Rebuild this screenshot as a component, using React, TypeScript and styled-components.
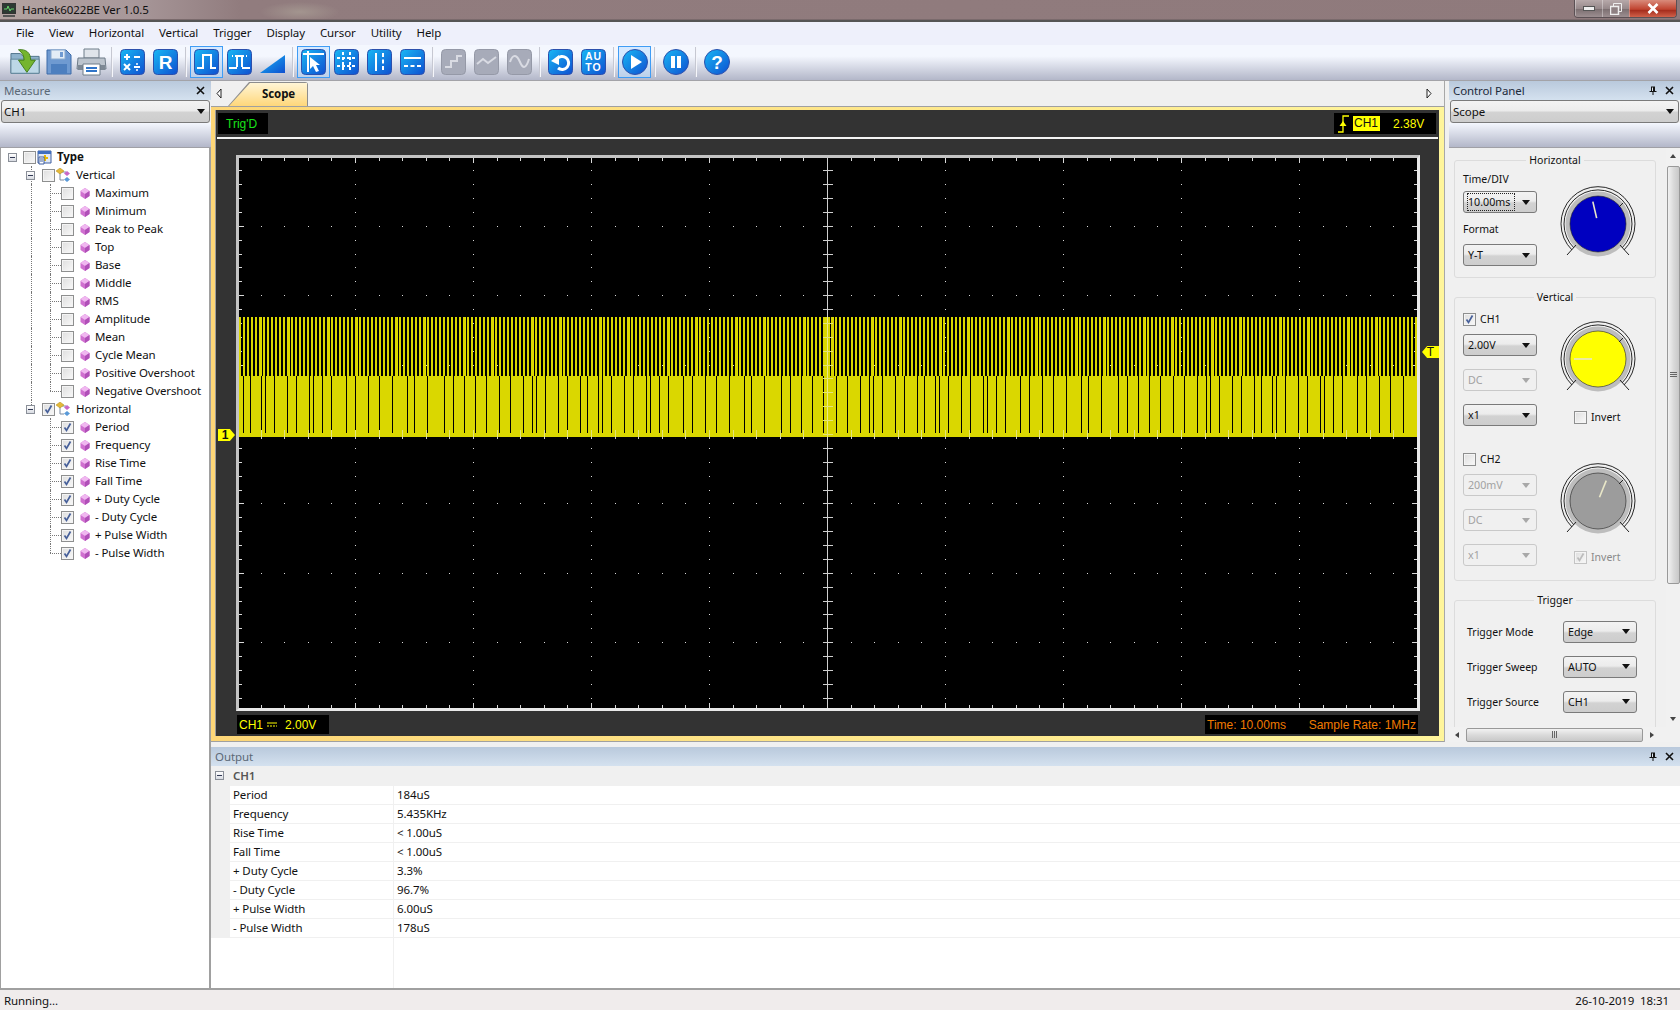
import React from "react"
import styled, { createGlobalStyle } from "styled-components"

const UI = `"Noto Sans", "Liberation Sans", sans-serif`
const ARIAL = `"Liberation Sans", Arial, sans-serif`

const GlobalStyle = createGlobalStyle`
    html, body { margin: 0; padding: 0; background: #f0f0f0; }
    * { box-sizing: border-box; }
`

const Window = styled.div`
    width: 1680px;
    height: 1010px;
    overflow: hidden;
    display: flex;
    flex-direction: column;
    font: 11.5px ${UI};
    letter-spacing: -0.1px;
    color: #111;
    background: #f0f0f0;
`

/* title bar */
const TitleBar = styled.div`
    height: 22px;
    flex: none;
    display: flex;
    align-items: flex-start;
    padding-left: 2px;
    border-bottom: 2px solid #555;
    background:
        radial-gradient(ellipse 40px 10px at 300px 12px, #a3958f 0, transparent 100%),
        linear-gradient(to right, #b3a3a1 0, #a8989a 130px, #917c7e 240px, #8f7a7c 100%);
    box-shadow: inset 0 -1px 0 #7a6a6c;
`
const TitleText = styled.span`
    margin: 1px 0 0 6px;
    line-height: 17px;
    color: #101010;
`
const WindowButtons = styled.div`
    margin-left: auto;
    margin-right: 3px;
    height: 18px;
    display: flex;
    border: 1px solid #5b5054;
    border-top: 0;
    border-radius: 0 0 4px 4px;
    overflow: hidden;
`
const WindowButton = styled.div<{ $close?: boolean }>`
    width: ${({ $close }) => ($close ? "47px" : "27px")};
    display: flex;
    align-items: center;
    justify-content: center;
    border-left: 1px solid rgba(255, 255, 255, 0.35);
    background: ${({ $close }) =>
        $close
            ? "linear-gradient(#d98b7b, #c0432f 55%, #a52c1c 60%, #d0614a)"
            : "linear-gradient(#b7a9aa, #97898b 50%, #7d7072 55%, #9c8e90)"};
`

/* menu and toolbar */
const MenuBar = styled.div`
    height: 23px;
    flex: none;
    display: flex;
    align-items: center;
    gap: 15px;
    padding: 0 0 2px 16px;
    background: #eef0fb;
`
const ToolBar = styled.div`
    height: 36px;
    flex: none;
    display: flex;
    align-items: center;
    padding: 0 0 2px 9px;
    border-bottom: 1px solid #a3a3a8;
    background: linear-gradient(#f4f7fe 0, #f4f7fe 32%, #b3b7c9 100%);
`
const ToolButton = styled.div<{ $active?: boolean }>`
    width: 33px;
    height: 32px;
    display: flex;
    align-items: center;
    justify-content: center;
    border: 1px solid ${({ $active }) => ($active ? "#3f9cf5" : "transparent")};
    background: ${({ $active }) => ($active ? "rgba(190, 222, 255, 0.55)" : "transparent")};
`
const ToolSep = styled.div`
    width: 2px;
    height: 30px;
    margin: 0 3px;
    background: linear-gradient(to right, #c6c8d2 50%, #f5f6fb 50%);
`
const HiddenDefs = styled.svg`
    position: absolute;
    width: 0;
    height: 0;
`

/* main layout */
const Main = styled.div`
    flex: 1;
    min-height: 0;
    display: grid;
    grid-template-columns: 211px 1fr;
`
const SidePanel = styled.div`
    display: flex;
    flex-direction: column;
    min-height: 0;
`
const PanelHeader = styled.div<{ $dim?: boolean }>`
    height: 19px;
    flex: none;
    display: flex;
    align-items: center;
    padding: 0 6px 1px 4px;
    background: linear-gradient(#b9c9dc, #d4e1ef);
    color: ${({ $dim }) => ($dim ? "#5b6876" : "#1d2a3a")};
`
const HeaderIcons = styled.span`
    margin-left: auto;
    display: flex;
    align-items: center;
    gap: 8px;
`
const PanelStrip = styled.div`
    height: 25px;
    flex: none;
    border-bottom: 1px solid #a0a0a6;
    background: linear-gradient(#f4f7fe, #b3b7c9);
`
const Combo = styled.div<{ $disabled?: boolean; $wide?: boolean }>`
    height: ${({ $wide }) => ($wide ? "23px" : "22px")};
    width: ${({ $wide }) => ($wide ? "auto" : "74px")};
    margin: ${({ $wide }) => ($wide ? "0 1px" : "0")};
    flex: none;
    display: flex;
    align-items: center;
    padding: 0 ${({ $wide }) => ($wide ? "1px" : "3px")};
    border: 1px solid ${({ $disabled }) => ($disabled ? "#c9c9c9" : "#7a7a7a")};
    border-radius: 3px;
    font-size: ${({ $wide }) => ($wide ? "11.5px" : "10.7px")};
    letter-spacing: 0;
    color: ${({ $disabled }) => ($disabled ? "#a2a2a2" : "#111")};
    background: ${({ $disabled }) =>
        $disabled ? "#f0f0f0" : "linear-gradient(#f3f3f3 0, #ececec 45%, #d2d2d2 55%, #cdcdcd 100%)"};
`
const ComboText = styled.span<{ $focus?: boolean }>`
    flex: 1;
    line-height: 16px;
    margin-right: ${({ $focus }) => ($focus ? "7px" : "0")};
    border: 1px ${({ $focus }) => ($focus ? "dotted #222" : "solid transparent")};
`
const ComboArrow = styled.span<{ $disabled?: boolean }>`
    width: 0;
    height: 0;
    margin-right: 3px;
    border-left: 4px solid transparent;
    border-right: 4px solid transparent;
    border-top: 5px solid ${({ $disabled }) => ($disabled ? "#a8a8a8" : "#111")};
`

/* measure tree */
const Tree = styled.div`
    flex: 1;
    background: #fff;
    border: solid #a0a0a0;
    border-width: 0 2px 2px 1px;
`
const TreeRow = styled.div<{ $level: number }>`
    position: relative;
    height: 18px;
    display: flex;
    align-items: center;
    padding-left: ${({ $level }) => [7, 25, 60][$level]}px;
    font-weight: ${({ $level }) => ($level === 0 ? 700 : 400)};
    white-space: nowrap;
`
const VGuide = styled.span<{ $x: number; $half?: boolean }>`
    position: absolute;
    left: ${({ $x }) => $x}px;
    top: 0;
    height: ${({ $half }) => ($half ? "9px" : "18px")};
    border-left: 1px dotted #777;
`
const HGuide = styled.span`
    position: absolute;
    left: 49px;
    top: 9px;
    width: 11px;
    border-top: 1px dotted #777;
`
const Expander = styled.span`
    position: relative;
    width: 9px;
    height: 9px;
    flex: none;
    border: 1px solid #8a8f98;
    background: linear-gradient(#fff, #d8dbe2);
    &::after {
        content: "";
        position: absolute;
        left: 1px;
        top: 3px;
        width: 5px;
        height: 1px;
        background: #333a55;
    }
`
const CheckBox = styled.span<{ $gap?: number; $faded?: boolean }>`
    width: 13px;
    height: 13px;
    flex: none;
    display: inline-flex;
    align-items: center;
    justify-content: center;
    margin-left: ${({ $gap }) => $gap ?? 0}px;
    border: 1px solid ${({ $faded }) => ($faded ? "#c4c4c4" : "#8e8f8f")};
    background: linear-gradient(135deg, #dedede, #f9f9f9);
    box-shadow: inset 0 0 0 1px #f4f4f4;
`
const TreeLabel = styled.span<{ $gap: number }>`
    margin-left: ${({ $gap }) => $gap}px;
    margin-bottom: 2px;
`

/* centre column */
const Right = styled.div`
    display: flex;
    flex-direction: column;
    min-height: 0;
`
const TopRow = styled.div`
    height: 661px;
    flex: none;
    display: flex;
`
const Center = styled.div`
    width: 1234px;
    flex: none;
    display: flex;
    flex-direction: column;
    border-right: 1px solid #a8a8a8;
`
const TabStrip = styled.div`
    height: 25px;
    flex: none;
    display: flex;
    align-items: flex-end;
    padding: 0 12px 0 5px;
    background: #f0f0f0;
`
const TabArrow = styled.span`
    align-self: center;
    display: flex;
`
const TabOutline = styled.div`
    width: 80px;
    height: 24px;
    margin-left: 6px;
    margin-right: auto;
    padding: 1px 1px 0 1px;
    background: #8d8d8d;
    clip-path: polygon(0 100%, 21px 0, 100% 0, 100% 100%);
    border-radius: 0 3px 0 0;
`
const TabFill = styled.div`
    height: 100%;
    padding-left: 33px;
    font-weight: 700;
    line-height: 21px;
    background: linear-gradient(#fff5d6, #ffd77a);
    clip-path: polygon(0 100%, 21px 0, 100% 0, 100% 100%);
`
const ScopeFrame = styled.div`
    flex: 1;
    min-height: 0;
    display: flex;
    border-top: 1px solid #a0a0a0;
    border-bottom: 1px solid #a0a0a0;
`
const ScopeBorder = styled.div`
    flex: 1;
    display: flex;
    padding: 3px 5px 5px 4px;
    background: linear-gradient(to right, #fdd677, #fff59b);
`
const ScopeDark = styled.div`
    position: relative;
    flex: 1;
    display: flex;
    flex-direction: column;
    background: #333;
    border-left: 1px solid #9b9b9b;
    font: 12px ${ARIAL};
    letter-spacing: 0;
`
const ScopeTopRow = styled.div`
    height: 21px;
    margin: 3px 3px 0 2px;
    flex: none;
    display: flex;
    justify-content: space-between;
`
const BlackBox = styled.div<{ $color: string; $w: number; $pad: number; $between?: boolean }>`
    width: ${({ $w }) => $w}px;
    height: 100%;
    display: flex;
    align-items: center;
    justify-content: ${({ $between }) => ($between ? "space-between" : "flex-start")};
    padding: 0 2px 0 ${({ $pad }) => $pad}px;
    background: #000;
    color: ${({ $color }) => $color};
    white-space: nowrap;
`
const ChannelTag = styled.span`
    margin: 0 13px 0 4px;
    padding: 0 2px 0 1px;
    background: #ff0;
    color: #111;
    line-height: 15px;
`
const CouplingMark = styled.svg`
    margin: 0 8px 0 4px;
`
const ScopeRule = styled.div`
    height: 2px;
    margin: 3px 1px 0 1px;
    flex: none;
    background: #f4f4f4;
`
const ScreenFrame = styled.div`
    width: 1184px;
    height: 556px;
    margin: 16px 0 0 20px;
    flex: none;
    border: 3px solid #e9e9e9;
    border-left-color: #c4c4c4;
    border-top-color: #c4c4c4;
    background: #000;
`
const ScreenSvg = styled.svg`
    display: block;
`
const ScopeBottomRow = styled.div`
    width: 1181px;
    height: 19px;
    margin: 4px 0 0 21px;
    flex: none;
    display: flex;
    justify-content: space-between;
`
const Marker = styled.div<{ $side: "left" | "right"; $top: number }>`
    position: absolute;
    top: ${({ $top }) => $top}px;
    ${({ $side }) => ($side === "left" ? "left: 2px;" : "right: 0;")}
    width: 17px;
    height: 12px;
    display: flex;
    align-items: center;
    justify-content: center;
    padding-right: ${({ $side }) => ($side === "left" ? "3px" : "0")};
    background: #ff0;
    color: #111;
    font: ${({ $side }) => ($side === "left" ? 700 : 400)} 12px/12px ${ARIAL};
    clip-path: ${({ $side }) =>
        $side === "left"
            ? "polygon(0 0, 70% 0, 100% 50%, 70% 100%, 0 100%)"
            : "polygon(30% 0, 100% 0, 100% 100%, 30% 100%, 0 50%)"};
`

/* control panel */
const ControlPanel = styled.div`
    width: 231px;
    margin-left: 4px;
    flex: none;
    display: flex;
    flex-direction: column;
    min-height: 0;
`
const ControlBody = styled.div`
    flex: 1;
    min-height: 0;
    display: flex;
`
const ControlContent = styled.div`
    width: 217px;
    flex: none;
    overflow: hidden;
    padding: 5px 0 0 5px;
`
const Group = styled.fieldset<{ $h: number }>`
    width: 202px;
    height: ${({ $h }) => $h}px;
    min-width: 0;
    margin: 0 0 12px 0;
    padding: 0 8px;
    border: 1px solid #dcdcdc;
    border-radius: 3px;
`
const Legend = styled.legend`
    margin: 0 auto;
    padding: 0 3px;
    font-size: 10.5px;
    letter-spacing: 0;
    line-height: 14px;
`
const GroupRow = styled.div<{ $top?: number }>`
    display: flex;
    gap: 21px;
    padding-top: ${({ $top }) => $top ?? 0}px;
`
const Controls = styled.div`
    width: 74px;
    flex: none;
    display: flex;
    flex-direction: column;
`
const FieldLabel = styled.div<{ $top: number }>`
    margin-top: ${({ $top }) => $top}px;
    height: 14px;
    line-height: 14px;
    font-size: 10.5px;
    letter-spacing: 0;
`
const ComboStack = styled.div<{ $top: number }>`
    margin-top: ${({ $top }) => $top}px;
    display: flex;
    flex-direction: column;
    gap: 13px;
`
const CheckRow = styled.label<{ $top?: number; $left?: number; $dim?: boolean }>`
    display: flex;
    align-items: center;
    gap: 4px;
    height: 14px;
    margin-top: ${({ $top }) => $top ?? 0}px;
    margin-left: ${({ $left }) => $left ?? 0}px;
    font-size: 10.5px;
    letter-spacing: 0;
    color: ${({ $dim }) => ($dim ? "#8a8a8a" : "#111")};
`
const KnobColumn = styled.div<{ $top: number }>`
    width: 80px;
    padding-top: ${({ $top }) => $top}px;
`
const TriggerList = styled.div`
    width: 170px;
    margin-left: 4px;
    padding-top: 14px;
    display: flex;
    flex-direction: column;
    gap: 14px;
`
const TriggerRow = styled.div`
    height: 21px;
    display: flex;
    align-items: center;
    justify-content: space-between;
    font-size: 10.5px;
    letter-spacing: 0;
`
const VScroll = styled.div`
    flex: 1;
    display: flex;
    flex-direction: column;
    align-items: center;
    background: #f1f1f1;
    padding-top: 6px;
`
const VThumb = styled.div`
    width: 13px;
    height: 418px;
    margin-top: 8px;
    display: flex;
    align-items: center;
    justify-content: center;
    border: 1px solid #999;
    border-radius: 2px;
    background: linear-gradient(to right, #f2f2f2, #dadada 50%, #c8c8c8);
`
const Grip = styled.div<{ $vertical?: boolean }>`
    width: ${({ $vertical }) => ($vertical ? "7px" : "6px")};
    height: ${({ $vertical }) => ($vertical ? "6px" : "7px")};
    background: ${({ $vertical }) =>
        $vertical
            ? "repeating-linear-gradient(#666 0 1px, transparent 1px 2px)"
            : "repeating-linear-gradient(to right, #666 0 1px, transparent 1px 2px)"};
`
const HScroll = styled.div`
    height: 15px;
    flex: none;
    display: flex;
    align-items: center;
    padding: 0 20px 0 6px;
    background: #f1f1f1;
`
const HThumb = styled.div`
    width: 177px;
    height: 14px;
    margin: 0 7px;
    display: flex;
    align-items: center;
    justify-content: center;
    border: 1px solid #999;
    border-radius: 2px;
    background: linear-gradient(#f2f2f2, #dadada 50%, #c8c8c8);
`
const Tri = styled.span<{ $dir: "up" | "down" | "left" | "right" }>`
    width: 0;
    height: 0;
    flex: none;
    border: 3.5px solid transparent;
    ${({ $dir }) =>
        $dir === "up"
            ? "border-bottom: 4px solid #444; border-top: 0;"
            : $dir === "down"
              ? "border-top: 4px solid #444; border-bottom: 0;"
              : $dir === "left"
                ? "border-right: 4px solid #444; border-left: 0;"
                : "border-left: 4px solid #444; border-right: 0;"}
`
const DownArrow = styled(Tri)`
    margin-top: auto;
    margin-bottom: 6px;
`

/* output */
const Output = styled.div`
    flex: 1;
    min-height: 0;
    margin-top: 5px;
    display: flex;
    flex-direction: column;
    border-bottom: 2px solid #a0a0a0;
    background: #fff;
`
const GroupHead = styled.div`
    height: 20px;
    flex: none;
    display: flex;
    align-items: center;
    gap: 9px;
    padding: 0 0 1px 4px;
    background: #f0f0f0;
    color: #555;
    font-weight: 600;
`
const OutRow = styled.div`
    height: 19px;
    flex: none;
    display: grid;
    grid-template-columns: 19px 164px 1fr;
    border-bottom: 1px solid #f0f0f0;
    line-height: 17px;
`
const Gutter = styled.span`
    background: #f0f0f0;
`
const OutLabel = styled.span`
    padding-left: 3px;
    border-right: 1px solid #f0f0f0;
`
const OutValue = styled.span`
    padding-left: 3px;
`
const OutFiller = styled.div`
    flex: 1;
    margin-left: 182px;
    border-left: 1px solid #f0f0f0;
`
const StatusBar = styled.div`
    height: 20px;
    flex: none;
    display: flex;
    align-items: center;
    justify-content: space-between;
    padding: 0 11px 0 4px;
    background: #f0ecec;
`

/* drawings */
function TitleIcon() {
    return (
        <svg width="14" height="15" viewBox="0 0 14 15" style={{ marginTop: 3 }}>
            <rect x="0.5" y="0.5" width="13" height="10" fill="#2d3a33" stroke="#333" />
            <path d="M2 6h3l1-3 2 5 1-2h3" fill="none" stroke="#67d36b" />
            <path d="M1 12h12v2H1z" fill="#555" />
        </svg>
    )
}

function Tile({ gray, children }: { gray?: boolean; children: React.ReactNode }) {
    return (
        <svg width="25" height="26" viewBox="0 0 25 26">
            <rect
                x="0.5"
                y="0.5"
                width="24"
                height="25"
                rx="4"
                fill={gray ? "#a7abb9" : "url(#tileBlue)"}
                stroke={gray ? "#9599a7" : "#2c50ad"}
            />
            <g fill="none" stroke={gray ? "#d9dbe3" : "#fff"} strokeWidth="2">
                {children}
            </g>
        </svg>
    )
}

function Round({ children }: { children: React.ReactNode }) {
    return (
        <svg width="26" height="26" viewBox="0 0 26 26">
            <circle cx="13" cy="13" r="12.5" fill="url(#tileBlue)" stroke="#2c50ad" />
            {children}
        </svg>
    )
}

const TileText = styled.text`
    font-family: ${ARIAL};
    font-weight: 700;
    fill: #fff;
    stroke: none;
`

function FolderIcon() {
    return (
        <svg width="33" height="30" viewBox="0 0 33 30">
            <path d="M1 6h10l3 3h17v18H1z" fill="#8fb3cc" stroke="#4f7289" />
            <path d="M1 12h30v15H1z" fill="#bcd7e6" stroke="#5f8499" />
            <path d="M9 2c8-1 13 3 13 11h5l-9 13-9-13h6c0-5-2-8-6-11z" fill="#75b52f" stroke="#3f7c18" />
        </svg>
    )
}

function SaveIcon() {
    return (
        <svg width="26" height="26" viewBox="0 0 26 26">
            <path d="M1 1h19l5 5v19H1z" fill="#6f9ad1" stroke="#3c6aa8" />
            <path d="M5 1h14v9H5z" fill="#e4edf6" stroke="#8cabcf" />
            <path d="M14 3h3v5h-3z" fill="#6f9ad1" />
            <path d="M5 15h16v10H5z" fill="#4d7fbf" />
        </svg>
    )
}

function PrintIcon() {
    return (
        <svg width="31" height="28" viewBox="0 0 31 28">
            <path d="M8 1h15v9H8z" fill="#dfe4ea" stroke="#6f7c89" />
            <path d="M2 10h27l1 11H1z" fill="#bcc4cd" stroke="#6f7c89" />
            <path d="M2 17h27v5H2z" fill="#7d8894" />
            <path d="M7 16h17v11H7z" fill="#fff" stroke="#6f7c89" />
            <path d="M10 20h11M10 23h11" stroke="#2f74c8" strokeWidth="2" />
        </svg>
    )
}

function RampIcon() {
    return (
        <svg width="26" height="26" viewBox="0 0 26 26">
            <polygon points="0,24 25,6 25,24" fill="url(#tileBlue)" />
        </svg>
    )
}

function CloseGlyph() {
    return (
        <svg width="9" height="9" viewBox="0 0 9 9">
            <path d="M1 1l7 7M8 1l-7 7" stroke="#111" strokeWidth="1.6" />
        </svg>
    )
}

function PinGlyph() {
    return (
        <svg width="8" height="9" viewBox="0 0 8 9">
            <path d="M2 0.5h4v4.5h1.5v1h-3v3h-1v-3h-3v-1H2z" fill="#111" />
            <path d="M3 1.5h1v3.5H3z" fill="#dfe8f2" />
        </svg>
    )
}

function CheckMark({ dim }: { dim?: boolean }) {
    return (
        <svg width="11" height="11" viewBox="0 0 11 11">
            <path d="M2.5 5.5l2 3 4-7" fill="none" stroke={dim ? "#bcbcbc" : "#47609a"} strokeWidth="1.7" />
        </svg>
    )
}

function DiamondIcon() {
    return (
        <svg width="10" height="11" viewBox="0 0 9 11" style={{ marginLeft: 6, flex: "none" }}>
            <polygon points="4.5,0 9,3 9,8 4.5,11 0,8 0,3" fill="#d070d0" />
            <polygon points="4.5,0 9,3 4.5,6 0,3" fill="#f0b8f0" />
            <polygon points="4.5,6 9,3 9,8 4.5,11" fill="#b050b8" />
        </svg>
    )
}

function TypeIcon() {
    return (
        <svg width="15" height="15" viewBox="0 0 15 15" style={{ marginLeft: 1, flex: "none" }}>
            <path d="M1 1h13v12H1z" fill="#dfe8f6" stroke="#3e5f9f" />
            <path d="M1 1h13v3H1z" fill="#3f6fc0" />
            <path d="M8 5v6M5 8h6" stroke="#e8b800" strokeWidth="2" />
            <path d="M2 7h5v7H2z" fill="#fff" stroke="#3e5f9f" />
            <path d="M3 9h3M3 11h3" stroke="#3e5f9f" />
        </svg>
    )
}

function BranchIcon() {
    return (
        <svg width="15" height="15" viewBox="0 0 15 15" style={{ marginLeft: 1, flex: "none" }}>
            <path d="M4 4v8h4M4 4h6" fill="none" stroke="#7b8aa0" />
            <polygon points="4,0 8,3 4,6 0,3" fill="#e4b93a" stroke="#b78a14" strokeWidth="0.5" />
            <polygon points="11,3 14,5.5 11,8 8,5.5" fill="#c868c8" />
            <polygon points="11,9 14,11.5 11,14 8,11.5" fill="#5a9ad8" />
        </svg>
    )
}

function Knob({ fill, angle, len = 18, inner = 6 }: { fill: string; angle: number; len?: number; inner?: number }) {
    const rad = (angle * Math.PI) / 180
    const x1 = Math.sin(rad) * inner
    const y1 = -Math.cos(rad) * inner
    const x2 = Math.sin(rad) * (inner + len)
    const y2 = -Math.cos(rad) * (inner + len)
    return (
        <svg width="80" height="80" viewBox="-40 -40 80 80" style={{ display: "block" }}>
            <path d="M-26 26A37 37 0 1 1 26 26M-24 24A34 34 0 1 1 24 24" fill="none" stroke="#111" strokeWidth="0.9" />
            <circle r="32.5" fill="#bdbdbd" />
            <circle r="28" fill={fill} stroke="#222" strokeWidth="0.6" />
            <path d="M-22 21L-31 31M22 21L31 31M21-17L25-21" stroke="#222" strokeWidth="1" />
            <line x1={x1} y1={y1} x2={x2} y2={y2} stroke="#e9e7c8" strokeWidth="1.6" />
        </svg>
    )
}

// screen geometry: origin is the inside of the white frame
const SCREEN_W = 1178
const SCREEN_H = 550
const MID_X = 588
const MID_Y = 276
const STEP_X = 23.6
const STEP_Y = 13.88
const TRACE = "#dad700"

const LINE_DELTAS = [7, 11, 4, 9, 13, 9, 13, 4, 9, 9, 15, 9, 13, 11, 13, 15, 7, 13, 17, 9, 11, 11, 11, 13, 11, 13, 9, 4, 9, 13, 9, 13]
const STRIPE_WIDTHS = [2, 2, 2, 2, 2, 3, 2, 2, 2, 2, 2, 2, 3, 2, 2, 2, 2]

function buildTrace() {
    const stripes: { x: number; w: number }[] = []
    for (let i = 0; i * 4 < SCREEN_W; i++) {
        stripes.push({ x: i * 4, w: STRIPE_WIDTHS[i % STRIPE_WIDTHS.length] })
    }
    const lines: number[] = []
    let x = 4
    let i = 0
    while (x < SCREEN_W) {
        lines.push(x)
        x += LINE_DELTAS[i % LINE_DELTAS.length]
        i++
    }
    return { stripes, lines }
}

function buildGrid() {
    const dots: { x: number; y: number }[] = []
    const edgeX: { x: number; major: boolean }[] = []
    const edgeY: { y: number; major: boolean }[] = []
    for (let i = -25; i <= 25; i++) edgeX.push({ x: Math.round(MID_X + i * STEP_X), major: i % 5 === 0 })
    for (let j = -20; j <= 20; j++) edgeY.push({ y: Math.round(MID_Y + j * STEP_Y), major: j % 5 === 0 })
    for (let k = -4; k <= 4; k++) {
        for (const e of edgeY) dots.push({ x: Math.round(MID_X + k * 118), y: e.y })
    }
    for (let r = -3; r <= 3; r++) {
        for (const e of edgeX) dots.push({ x: e.x, y: Math.round(MID_Y + r * 69.4) })
    }
    return { dots, edgeX, edgeY }
}

const trace = buildTrace()
const grid = buildGrid()

function Screen() {
    return (
        <ScreenSvg width={SCREEN_W} height={SCREEN_H} shapeRendering="crispEdges">
            {grid.dots.map((d, i) => (
                <rect key={i} x={d.x} y={d.y} width="1" height="1" fill="#d8d8d8" />
            ))}
            {grid.edgeX.map((e, i) => (
                <g key={i} fill="#d8d8d8">
                    <rect x={e.x} y={0} width="1" height={e.major ? 5 : 3} />
                    <rect x={e.x} y={SCREEN_H - (e.major ? 5 : 3)} width="1" height={e.major ? 5 : 3} />
                </g>
            ))}
            {grid.edgeY.map((e, i) => (
                <g key={i} fill="#d8d8d8">
                    <rect x={0} y={e.y} width={e.major ? 5 : 3} height="1" />
                    <rect x={SCREEN_W - (e.major ? 5 : 3)} y={e.y} width={e.major ? 5 : 3} height="1" />
                </g>
            ))}
            <g fill={TRACE}>
                {trace.stripes.map((s, i) => (
                    <rect key={i} x={s.x} y={159} width={s.w} height={60} />
                ))}
                <rect x={586} y={159} width={5} height={60} />
                <rect x={0} y={218} width={SCREEN_W} height={61} />
            </g>
            {trace.lines.map((x, i) => (
                <rect key={i} x={x} y={218} width="1" height={57} fill="#000" />
            ))}
            <rect x={MID_X} y={0} width="1" height={SCREEN_H} fill="#cfcfcf" />
            <rect x={MID_X} y={159} width="1" height={120} fill="#e9e98c" />
            {grid.edgeY.map((e, i) => {
                const inTrace = e.y > 159 && e.y < 279
                return <rect key={i} x={MID_X - 4} y={e.y} width="10" height="1" fill={inTrace ? "#e4e47a" : "#cfcfcf"} />
            })}
            {grid.edgeX.map((e, i) => (
                <g key={i}>
                    <rect x={e.x} y={MID_Y - 4} width="1" height="7" fill="#e4e47a" />
                    <rect x={e.x} y={279} width="1" height="2" fill="#cfcfcf" />
                </g>
            ))}
        </ScreenSvg>
    )
}

function Select({ value, disabled, wide, focus }: { value: string; disabled?: boolean; wide?: boolean; focus?: boolean }) {
    return (
        <Combo $disabled={disabled} $wide={wide}>
            <ComboText $focus={focus}>{value}</ComboText>
            <ComboArrow $disabled={disabled} />
        </Combo>
    )
}

const verticalItems = [
    "Maximum",
    "Minimum",
    "Peak to Peak",
    "Top",
    "Base",
    "Middle",
    "RMS",
    "Amplitude",
    "Mean",
    "Cycle Mean",
    "Positive Overshoot",
    "Negative Overshoot",
]
const horizontalItems = ["Period", "Frequency", "Rise Time", "Fall Time", "+ Duty Cycle", "- Duty Cycle", "+ Pulse Width", "- Pulse Width"]
const readings = [
    ["Period", "184uS"],
    ["Frequency", "5.435KHz"],
    ["Rise Time", "< 1.00uS"],
    ["Fall Time", "< 1.00uS"],
    ["+ Duty Cycle", "3.3%"],
    ["- Duty Cycle", "96.7%"],
    ["+ Pulse Width", "6.00uS"],
    ["- Pulse Width", "178uS"],
]
const menus = ["File", "View", "Horizontal", "Vertical", "Trigger", "Display", "Cursor", "Utility", "Help"]

function LeafRow({ label, checked, last, trunk }: { label: string; checked?: boolean; last?: boolean; trunk?: boolean }) {
    return (
        <TreeRow $level={2}>
            {trunk && <VGuide $x={30} />}
            <VGuide $x={49} $half={last} />
            <HGuide />
            <CheckBox>{checked && <CheckMark />}</CheckBox>
            <DiamondIcon />
            <TreeLabel $gap={5}>{label}</TreeLabel>
        </TreeRow>
    )
}

function MeasurePanel() {
    return (
        <SidePanel>
            <PanelHeader $dim>
                Measure
                <HeaderIcons>
                    <CloseGlyph />
                </HeaderIcons>
            </PanelHeader>
            <Select value="CH1" wide />
            <PanelStrip />
            <Tree>
                <TreeRow $level={0}>
                    <Expander />
                    <CheckBox $gap={6} />
                    <TypeIcon />
                    <TreeLabel $gap={5}>Type</TreeLabel>
                </TreeRow>
                <TreeRow $level={1}>
                    <VGuide $x={30} />
                    <Expander />
                    <CheckBox $gap={7} />
                    <BranchIcon />
                    <TreeLabel $gap={5}>Vertical</TreeLabel>
                </TreeRow>
                {verticalItems.map((label, i) => (
                    <LeafRow key={label} label={label} trunk last={i === verticalItems.length - 1} />
                ))}
                <TreeRow $level={1}>
                    <VGuide $x={30} $half />
                    <Expander />
                    <CheckBox $gap={7}>
                        <CheckMark />
                    </CheckBox>
                    <BranchIcon />
                    <TreeLabel $gap={5}>Horizontal</TreeLabel>
                </TreeRow>
                {horizontalItems.map((label, i) => (
                    <LeafRow key={label} label={label} checked last={i === horizontalItems.length - 1} />
                ))}
            </Tree>
        </SidePanel>
    )
}

function ScopeView() {
    return (
        <Center>
            <TabStrip>
                <TabArrow>
                    <svg width="6" height="11" viewBox="0 0 6 11">
                        <path d="M5 1v9L1 5.5z" fill="#fff" stroke="#222" />
                    </svg>
                </TabArrow>
                <TabOutline>
                    <TabFill>Scope</TabFill>
                </TabOutline>
                <TabArrow>
                    <svg width="6" height="11" viewBox="0 0 6 11">
                        <path d="M1 1v9l4-4.5z" fill="#fff" stroke="#222" />
                    </svg>
                </TabArrow>
            </TabStrip>
            <ScopeFrame>
                <ScopeBorder>
                    <ScopeDark>
                        <ScopeTopRow>
                            <BlackBox $color="#19e019" $w={50} $pad={8}>
                                Trig'D
                            </BlackBox>
                            <BlackBox $color="#ff0" $w={102} $pad={4}>
                                <svg width="11" height="18" viewBox="0 0 11 18">
                                    <path d="M0 17h5V1h6" fill="none" stroke="#ff0" strokeWidth="1.3" />
                                    <path d="M5 6l3.5 5h-7z" fill="#ff0" />
                                </svg>
                                <ChannelTag>CH1</ChannelTag>
                                2.38V
                            </BlackBox>
                        </ScopeTopRow>
                        <ScopeRule />
                        <ScreenFrame>
                            <Screen />
                        </ScreenFrame>
                        <ScopeBottomRow>
                            <BlackBox $color="#ff0" $w={92} $pad={2}>
                                CH1
                                <CouplingMark width="10" height="5" viewBox="0 0 10 5">
                                    <path d="M0 1h10" stroke="#ff0" />
                                    <path d="M0 4h10" stroke="#ff0" strokeDasharray="2 1" />
                                </CouplingMark>
                                2.00V
                            </BlackBox>
                            <BlackBox $color="#f07a00" $w={213} $pad={2} $between>
                                <span>Time: 10.00ms</span>
                                <span>Sample Rate: 1MHz</span>
                            </BlackBox>
                        </ScopeBottomRow>
                        <Marker $side="left" $top={319}>
                            1
                        </Marker>
                        <Marker $side="right" $top={236}>
                            T
                        </Marker>
                    </ScopeDark>
                </ScopeBorder>
            </ScopeFrame>
        </Center>
    )
}

function Control() {
    return (
        <ControlPanel>
            <PanelHeader>
                Control Panel
                <HeaderIcons>
                    <PinGlyph />
                    <CloseGlyph />
                </HeaderIcons>
            </PanelHeader>
            <Select value="Scope" wide />
            <PanelStrip />
            <ControlBody>
                <ControlContent>
                    <Group $h={125}>
                        <Legend>Horizontal</Legend>
                        <GroupRow>
                            <Controls>
                                <FieldLabel $top={5}>Time/DIV</FieldLabel>
                                <ComboStack $top={5}>
                                    <Select value="10.00ms" focus />
                                </ComboStack>
                                <FieldLabel $top={9}>Format</FieldLabel>
                                <ComboStack $top={8}>
                                    <Select value="Y-T" />
                                </ComboStack>
                            </Controls>
                            <KnobColumn $top={17}>
                                <Knob fill="#0000c0" angle={-13} len={17} inner={6} />
                            </KnobColumn>
                        </GroupRow>
                    </Group>
                    <Group $h={291}>
                        <Legend>Vertical</Legend>
                        <GroupRow $top={8}>
                            <Controls>
                                <CheckRow>
                                    <CheckBox>
                                        <CheckMark />
                                    </CheckBox>
                                    CH1
                                </CheckRow>
                                <ComboStack $top={8}>
                                    <Select value="2.00V" />
                                    <Select value="DC" disabled />
                                    <Select value="x1" />
                                </ComboStack>
                            </Controls>
                            <KnobColumn $top={7}>
                                <Knob fill="#ffff00" angle={-90} len={18} inner={6} />
                                <CheckRow $top={11} $left={16}>
                                    <CheckBox />
                                    Invert
                                </CheckRow>
                            </KnobColumn>
                        </GroupRow>
                        <GroupRow $top={26}>
                            <Controls>
                                <CheckRow>
                                    <CheckBox />
                                    CH2
                                </CheckRow>
                                <ComboStack $top={8}>
                                    <Select value="200mV" disabled />
                                    <Select value="DC" disabled />
                                    <Select value="x1" disabled />
                                </ComboStack>
                            </Controls>
                            <KnobColumn $top={9}>
                                <Knob fill="#9c9c9c" angle={22} len={18} inner={4} />
                                <CheckRow $top={9} $left={16} $dim>
                                    <CheckBox $faded>
                                        <CheckMark dim />
                                    </CheckBox>
                                    Invert
                                </CheckRow>
                            </KnobColumn>
                        </GroupRow>
                    </Group>
                    <Group $h={200}>
                        <Legend>Trigger</Legend>
                        <TriggerList>
                            <TriggerRow>
                                Trigger Mode
                                <Select value="Edge" />
                            </TriggerRow>
                            <TriggerRow>
                                Trigger Sweep
                                <Select value="AUTO" />
                            </TriggerRow>
                            <TriggerRow>
                                Trigger Source
                                <Select value="CH1" />
                            </TriggerRow>
                        </TriggerList>
                    </Group>
                </ControlContent>
                <VScroll>
                    <Tri $dir="up" />
                    <VThumb>
                        <Grip $vertical />
                    </VThumb>
                    <DownArrow $dir="down" />
                </VScroll>
            </ControlBody>
            <HScroll>
                <Tri $dir="left" />
                <HThumb>
                    <Grip />
                </HThumb>
                <Tri $dir="right" />
            </HScroll>
        </ControlPanel>
    )
}

function OutputPanel() {
    return (
        <Output>
            <PanelHeader $dim>
                Output
                <HeaderIcons>
                    <PinGlyph />
                    <CloseGlyph />
                </HeaderIcons>
            </PanelHeader>
            <GroupHead>
                <Expander />
                CH1
            </GroupHead>
            {readings.map(([label, value]) => (
                <OutRow key={label}>
                    <Gutter />
                    <OutLabel>{label}</OutLabel>
                    <OutValue>{value}</OutValue>
                </OutRow>
            ))}
            <OutFiller />
        </Output>
    )
}

export default function App() {
    return (
        <Window>
            <GlobalStyle />
            <HiddenDefs>
                <defs>
                    <linearGradient id="tileBlue" x1="0" y1="0" x2="1" y2="1">
                        <stop offset="0" stopColor="#19b8f5" />
                        <stop offset="1" stopColor="#0e4fd0" />
                    </linearGradient>
                </defs>
            </HiddenDefs>
            <TitleBar>
                <TitleIcon />
                <TitleText>Hantek6022BE Ver 1.0.5</TitleText>
                <WindowButtons>
                    <WindowButton>
                        <svg width="12" height="5">
                            <rect x="0.5" y="0.5" width="11" height="4" fill="#eee" stroke="#555" />
                        </svg>
                    </WindowButton>
                    <WindowButton>
                        <svg width="12" height="12" viewBox="0 0 12 12">
                            <path d="M3.5 0.5h8v8h-8z" fill="none" stroke="#eee" />
                            <path d="M0.5 3.5h8v8h-8z" fill="#8e8082" stroke="#eee" strokeWidth="1.5" />
                        </svg>
                    </WindowButton>
                    <WindowButton $close>
                        <svg width="12" height="11" viewBox="0 0 12 11">
                            <path d="M1.5 1l9 9M10.5 1l-9 9" stroke="#fff" strokeWidth="2.6" />
                        </svg>
                    </WindowButton>
                </WindowButtons>
            </TitleBar>
            <MenuBar>
                {menus.map((m) => (
                    <span key={m}>{m}</span>
                ))}
            </MenuBar>
            <ToolBar>
                <ToolButton><FolderIcon /></ToolButton>
                <ToolButton><SaveIcon /></ToolButton>
                <ToolButton><PrintIcon /></ToolButton>
                <ToolSep />
                <ToolButton>
                    <Tile>
                        <path d="M4 8h6M7 5v6M14 8h6M4 15l6 6M10 15l-6 6M14 18h6" />
                        <path d="M17 15v.1M17 21v.1" strokeLinecap="round" />
                    </Tile>
                </ToolButton>
                <ToolButton>
                    <Tile>
                        <TileText x="12.5" y="20" fontSize="19" textAnchor="middle">R</TileText>
                    </Tile>
                </ToolButton>
                <ToolSep />
                <ToolButton $active>
                    <Tile><path d="M3 19h6V6h8v13h5" /></Tile>
                </ToolButton>
                <ToolButton>
                    <Tile><path d="M8 7h9M10 7v11M15 7v11M2 19h8M15 19h8M5 7h1M19 7h1" /></Tile>
                </ToolButton>
                <ToolButton><RampIcon /></ToolButton>
                <ToolSep />
                <ToolButton $active>
                    <Tile>
                        <path d="M2 5h21M7 2v21" />
                        <path d="M9 8v12l3-3 3 6 3-1-3-6h4z" fill="#fff" stroke="none" />
                    </Tile>
                </ToolButton>
                <ToolButton>
                    <Tile><path d="M3 9h19M3 17h19M9 3v20M16 3v20" strokeDasharray="3 2" /></Tile>
                </ToolButton>
                <ToolButton>
                    <Tile>
                        <path d="M9 4v18" />
                        <path d="M16 4v18" strokeDasharray="4 2.5" />
                    </Tile>
                </ToolButton>
                <ToolButton>
                    <Tile>
                        <path d="M4 9h17" />
                        <path d="M4 17h17" strokeDasharray="4 2.5" />
                    </Tile>
                </ToolButton>
                <ToolSep />
                <ToolButton>
                    <Tile gray><path d="M4 18h6v-6h6V7h5" /></Tile>
                </ToolButton>
                <ToolButton>
                    <Tile gray><path d="M3 15l6-5 5 4 8-6" /></Tile>
                </ToolButton>
                <ToolButton>
                    <Tile gray><path d="M3 13C6 4 10 6 13 13S19 20 22 10" /></Tile>
                </ToolButton>
                <ToolSep />
                <ToolButton>
                    <Tile>
                        <path d="M9 10a6.5 6.5 0 1 1 1 9" strokeWidth="3" />
                        <path d="M3 12l8-6v10z" fill="#fff" stroke="none" />
                    </Tile>
                </ToolButton>
                <ToolButton>
                    <Tile>
                        <TileText x="12.5" y="11" fontSize="10.5" textAnchor="middle" letterSpacing="1">AU</TileText>
                        <TileText x="12.5" y="22" fontSize="10.5" textAnchor="middle" letterSpacing="1">TO</TileText>
                    </Tile>
                </ToolButton>
                <ToolSep />
                <ToolButton $active>
                    <Round><path d="M9 6l11 7-11 7z" fill="#fff" /></Round>
                </ToolButton>
                <ToolSep />
                <ToolButton>
                    <Round><path d="M8 7h4v12H8zM14 7h4v12h-4z" fill="#fff" /></Round>
                </ToolButton>
                <ToolSep />
                <ToolButton>
                    <Round>
                        <TileText x="13" y="20" fontSize="19" textAnchor="middle">?</TileText>
                    </Round>
                </ToolButton>
            </ToolBar>
            <Main>
                <MeasurePanel />
                <Right>
                    <TopRow>
                        <ScopeView />
                        <Control />
                    </TopRow>
                    <OutputPanel />
                </Right>
            </Main>
            <StatusBar>
                <span>Running...</span>
                <span>26-10-2019 &nbsp;18:31</span>
            </StatusBar>
        </Window>
    )
}
